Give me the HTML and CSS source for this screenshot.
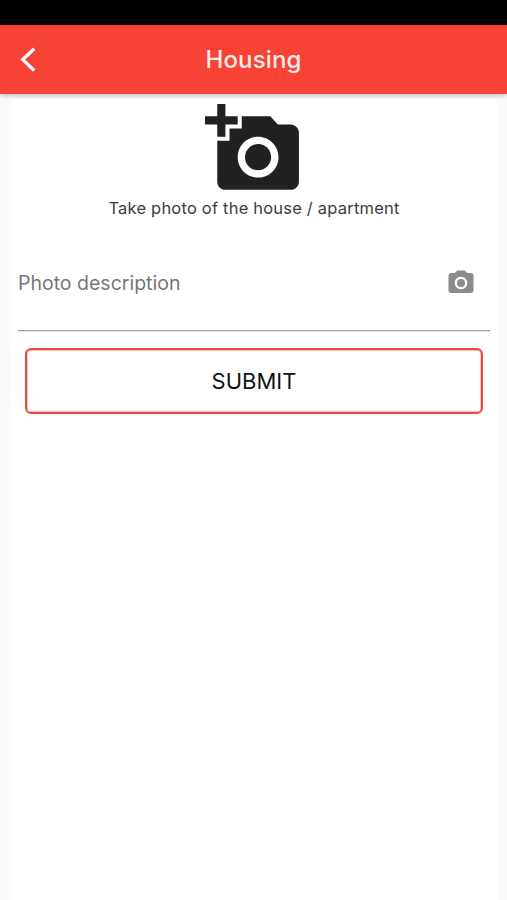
FILE: index.html
```html
<!DOCTYPE html>
<html lang="en">
<head>
<meta charset="utf-8">
<title>Housing</title>
<link rel="stylesheet" href="styles.css">
</head>
<body>
<div class="status"></div>
<header class="bar">
  <svg class="back" viewBox="0 0 20 28"><path d="M16.2 2.7 4.8 13.6l11.4 10.9"/></svg>
  <h1 class="title">Housing</h1>
</header>
<main class="panel">
  <div class="photo">
    <svg class="add" viewBox="0 0 24 24"><path d="M3 4V1h2v3h3v2H5v3H3V6H0V4h3zm3 6V7h3V4h7l1.83 2H21c1.1 0 2 .9 2 2v12c0 1.1-.9 2-2 2H5c-1.1 0-2-.9-2-2V10h3zm7 9c2.76 0 5-2.24 5-5s-2.24-5-5-5-5 2.24-5 5 2.24 5 5 5zm-3.2-5c0 1.77 1.43 3.2 3.2 3.2s3.2-1.43 3.2-3.2-1.43-3.2-3.2-3.2-3.2 1.43-3.2 3.2z"/></svg>
    <p class="caption">Take photo of the house / apartment</p>
  </div>
  <div class="field">
    <span class="label">Photo description</span>
    <svg class="cam" viewBox="0 0 24 24"><circle cx="12" cy="12" r="3.2"/><path d="M9 2 7.17 4H4c-1.1 0-2 .9-2 2v12c0 1.1.9 2 2 2h16c1.1 0 2-.9 2-2V6c0-1.1-.9-2-2-2h-3.17L15 2H9zm3 15c-2.76 0-5-2.24-5-5s2.24-5 5-5 5 2.24 5 5-2.24 5-5 5z"/></svg>
  </div>
  <button class="submit">SUBMIT</button>
</main>
</body>
</html>
```
FILE: styles.css
```css
* { box-sizing: border-box; }
body {
  margin: 0;
  height: 900px;
  display: flex;
  flex-direction: column;
  overflow: hidden;
  background: #fafafa;
  font-family: Inter, "Liberation Sans", sans-serif;
}
.status { height: 25px; background: #000; }
.bar {
  height: 69px;
  display: grid;
  grid-template-columns: 56px 1fr 56px;
  align-items: center;
  background: #f64336;
  box-shadow: 0 1px 5px rgba(0, 0, 0, .3);
}
.back {
  width: 20px;
  height: 28px;
  margin-left: 18px;
  fill: none;
  stroke: #fff;
  stroke-width: 3.3;
}
.title {
  margin: 0;
  text-align: center;
  color: #ffece8;
  font-size: 24px;
  font-weight: 500;
  line-height: 30px;
  letter-spacing: .15px;
}
.panel {
  flex: 1;
  margin: 5px 10px 0 12px;
  background: #fff;
}
.photo {
  display: flex;
  flex-direction: column;
  align-items: center;
  padding: 1px 1px 0 0;
}
.add { width: 98px; height: 98px; margin-right: 1px; fill: #212121; }
.caption {
  margin: 0;
  color: #3c3c3c;
  font-size: 16.5px;
  line-height: 20px;
  letter-spacing: .2px;
}
.field {
  height: 94px;
  margin: 19px 7px 0 6px;
  padding: 0 14.5px 2px 0;
  display: flex;
  align-items: center;
  justify-content: space-between;
  border-bottom: 1px solid #a0a0a0;
  box-shadow: 0 .5px 0 #c8c8c8;
}
.label { color: #777; font-size: 19.5px; line-height: 24px; }
.cam { width: 30px; height: 30px; fill: #8b8b8b; }
.submit {
  display: block;
  width: 458px;
  height: 66px;
  margin: 17px 0 0 13px;
  padding: 0;
  border: 2px solid #ed4a3e;
  border-radius: 6px;
  background: #fff;
  box-shadow: inset 0 0 0 .5px #f3867e;
  color: #111;
  font: 400 22px/28px Inter, "Liberation Sans", sans-serif;
}
```
